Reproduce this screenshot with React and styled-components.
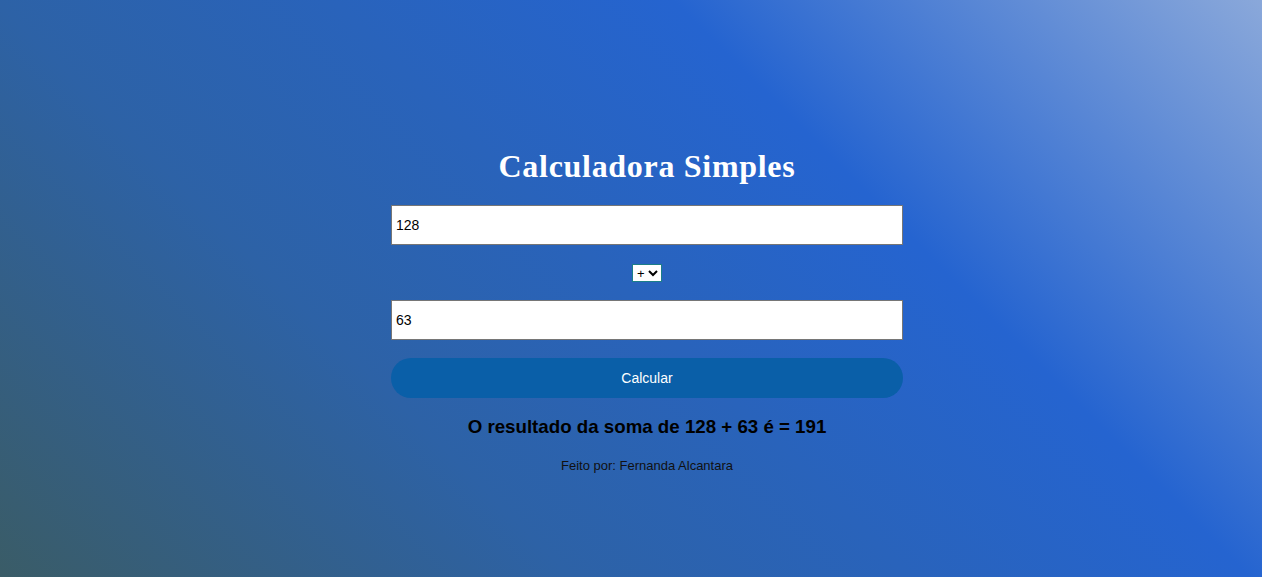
import React, { useState } from "react";
import styled, { createGlobalStyle } from "styled-components";

const Global = createGlobalStyle`
  html, body { margin: 0; padding: 0; height: 100%; }
  body {
    font-family: "Liberation Sans", Arial, sans-serif;
    background: linear-gradient(45deg, #3a5c67 0%, #2d62a6 31%, #2564d0 68%, #8aa8da 100%);
    background-attachment: fixed;
    min-height: 577px;
  }
  #root { min-height: 577px; }
`;

const Page = styled.main`
  display: flex;
  flex-direction: column;
  align-items: center;
  padding-top: 146px;
  padding-left: 32px;
`;

const Title = styled.h1`
  margin: 0;
  font-family: "Liberation Serif", Cambria, serif;
  font-size: 32px;
  line-height: 40px;
  font-weight: bold;
  letter-spacing: 0.7px;
  color: #fff;
`;

const Form = styled.div`
  width: 512px;
  display: flex;
  flex-direction: column;
  align-items: center;
  margin-top: 19px;
`;

const NumberInput = styled.input`
  box-sizing: border-box;
  width: 100%;
  height: 40px;
  margin-top: ${(p) => p.$gap || 0}px;
  padding: 0 4px;
  border: 1px solid #767676;
  background: #fff;
  font-family: "Liberation Sans", Arial, sans-serif;
  font-size: 14px;
  color: #000;
  outline: none;
`;

const OpSelect = styled.select`
  margin-top: 19px;
  height: 18px;
  width: 30px;
  padding: 0;
  border: 1px solid #1c7f88;
  border-radius: 0;
  background: #fff;
  font-family: "Liberation Sans", Arial, sans-serif;
  font-size: 13px;
  color: #000;
`;

const CalcButton = styled.button`
  box-sizing: border-box;
  width: 100%;
  height: 40px;
  margin-top: 18px;
  border: none;
  border-radius: 20px;
  background: #0a5fa8;
  color: #fff;
  font-family: "Liberation Sans", Arial, sans-serif;
  font-size: 14px;
  cursor: pointer;
`;

const Result = styled.h3`
  margin: 18px 0 0;
  font-size: 18.72px;
  line-height: 22px;
  font-weight: bold;
  color: #000;
`;

const Footer = styled.p`
  margin: 20px 0 0;
  font-size: 13px;
  line-height: 15px;
  color: #111;
`;

export default function App() {
  const [a, setA] = useState("128");
  const [b, setB] = useState("63");
  const [op, setOp] = useState("+");
  return (
    <>
      <Global />
      <Page>
        <Title>Calculadora Simples</Title>
        <Form>
          <NumberInput value={a} onChange={(e) => setA(e.target.value)} />
          <OpSelect value={op} onChange={(e) => setOp(e.target.value)}>
            <option value="+">+</option>
            <option value="-">-</option>
            <option value="*">*</option>
            <option value="/">/</option>
          </OpSelect>
          <NumberInput $gap={18} value={b} onChange={(e) => setB(e.target.value)} />
          <CalcButton>Calcular</CalcButton>
          <Result>O resultado da soma de 128 + 63 é = 191</Result>
          <Footer>Feito por: Fernanda Alcantara</Footer>
        </Form>
      </Page>
    </>
  );
}
